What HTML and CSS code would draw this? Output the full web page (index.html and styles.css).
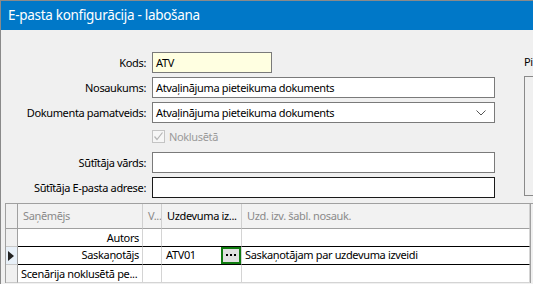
FILE: index.html
```html
<!DOCTYPE html>
<html>
<head>
<meta charset="utf-8">
<link rel="stylesheet" href="styles.css">
</head>
<body>
<div class="window">
  <div class="titlebar">E-pasta konfigurācija - labošana</div>
  <div class="content">
    <div class="top">
      <div class="fields">
        <label class="lbl">Kods:</label>
        <div class="inp short yellow">ATV</div>
        <label class="lbl">Nosaukums:</label>
        <div class="inp">Atvaļinājuma pieteikuma dokuments</div>
        <label class="lbl">Dokumenta pamatveids:</label>
        <div class="inp combo">Atvaļinājuma pieteikuma dokuments
          <svg class="chev" width="10" height="6" viewBox="0 0 10 6"><path d="M0.5 0.5 L5 5 L9.5 0.5" fill="none" stroke="#555" stroke-width="1"/></svg>
        </div>
        <span></span>
        <div class="check">
          <span class="box"><svg width="11" height="11" viewBox="0 0 11 11"><path d="M1.5 5.5 L4 8.5 L9.5 1.5" fill="none" stroke="#b5b5b5" stroke-width="1.2"/></svg></span>
          <span class="check-text">Noklusētā</span>
        </div>
        <label class="lbl">Sūtītāja vārds:</label>
        <div class="inp"></div>
        <label class="lbl">Sūtītāja E-pasta adrese:</label>
        <div class="inp focus"></div>
      </div>
      <div class="side">
        <div class="side-lbl">Pi</div>
        <div class="side-box"></div>
      </div>
    </div>
    <div class="grid">
      <div class="c ind hd"></div>
      <div class="c hd gray">Saņēmējs</div>
      <div class="c hd gray">V...</div>
      <div class="c hd">Uzdevuma iz...</div>
      <div class="c hd gray">Uzd. izv. šabl. nosauk.</div>
      <div class="c hd end"></div>

      <div class="c ind"></div>
      <div class="c right">Autors</div>
      <div class="c"></div>
      <div class="c"></div>
      <div class="c"></div>
      <div class="c end"></div>

      <div class="c ind sel-ind"><span class="tri"></span></div>
      <div class="c right sel">Saskaņotājs</div>
      <div class="c sel"></div>
      <div class="c sel edit">ATV01<span class="dots"><svg width="12" height="3" viewBox="0 0 12 3"><rect x="1" y="0" width="2" height="2" fill="#000"/><rect x="5" y="0" width="2" height="2" fill="#000"/><rect x="9" y="0" width="2" height="2" fill="#000"/></svg></span></div>
      <div class="c sel">Saskaņotājam par uzdevuma izveidi</div>
      <div class="c end"></div>

      <div class="c ind"></div>
      <div class="c">Scenārija noklusētā pe...</div>
      <div class="c"></div>
      <div class="c"></div>
      <div class="c"></div>
      <div class="c end"></div>
    </div>
  </div>
</div>
</body>
</html>
```

FILE: styles.css
```css
* { box-sizing: border-box; }
html, body { margin: 0; padding: 0; }
body {
  width: 533px;
  height: 284px;
  overflow: hidden;
  background: #f0f0f0;
  font-family: "Noto Sans", "Open Sans", sans-serif;
  font-size: 11px;
  letter-spacing: -0.35px;
  color: #000;
}
.window {
  width: 533px;
  height: 284px;
  border-top: 1px solid #8a8a8a;
  border-left: 1px solid #8a8a8a;
  background: #f0f0f0;
  overflow: hidden;
}
.titlebar {
  height: 29px;
  background: #0078c8;
  color: #fff;
  font-size: 13.5px;
  letter-spacing: -0.3px;
  line-height: 28px;
  padding-left: 7px;
}
.content {
  padding-top: 22px;
}
.top {
  display: flex;
  height: 151px;
}
.fields {
  flex: none;
  display: grid;
  grid-template-columns: 145px 343px;
  grid-auto-rows: 21px;
  row-gap: 4px;
  column-gap: 6px;
  width: 523px;
  align-items: center;
}
.lbl {
  text-align: right;
  line-height: 21px;
  white-space: nowrap;
}
.inp {
  height: 21px;
  border: 1px solid #7a7a7a;
  background: #fff;
  line-height: 19px;
  padding-left: 3px;
  white-space: nowrap;
  position: relative;
}
.inp.short { width: 120px; }
.inp.yellow { background: #ffffe1; }
.inp.focus { border-color: #1a1a1a; }
.combo .chev {
  position: absolute;
  right: 8px;
  top: 7px;
}
.check {
  display: flex;
  align-items: center;
  gap: 4px;
  height: 21px;
  margin-top: -2px;
}
.box {
  width: 13px;
  height: 13px;
  border: 1px solid #c4c4c4;
  background: #f6f6f6;
  display: flex;
  align-items: center;
  justify-content: center;
}
.check-text { color: #9a9a9a; }
.side {
  display: flex;
  flex-direction: column;
  width: 12px;
  flex: none;
  overflow: hidden;
}
.side-lbl {
  white-space: nowrap;
  line-height: 14px;
  margin-top: 3px;
}
.side-box {
  margin-top: 7px;
  height: 120px;
  border: 1px solid #8a8a8a;
  border-right: none;
  background: #f0f0f0;
  width: 12px;
}
.grid {
  margin-left: 4px;
  display: grid;
  grid-template-columns: 12px 125px 19px 80px 288px 20px;
  grid-template-rows: 25px 18px 18px 18px;
  border-top: 1px solid #a0a0a0;
  border-left: 1px solid #a0a0a0;
  background: #fff;
}
.c {
  border-right: 1px solid #d4d4d4;
  border-bottom: 1px solid #d4d4d4;
  padding: 0 3px;
  white-space: nowrap;
  overflow: hidden;
  line-height: 17px;
  position: relative;
}
.c.hd {
  background: #f2f2f2;
  border-right: 1px solid #d0d0d0;
  border-bottom: 1px solid #a0a0a0;
  line-height: 24px;
  padding-left: 5px;
}
.c.gray { color: #8a8a8a; }
.c.end {
  background: #f0f0f0;
  border-right: none;
  border-bottom: none;
  border-left: 1px solid #a0a0a0;
}
.c.hd.end { background: #f0f0f0; border-bottom: none; }
.c.ind {
  background: #f0f0f0;
  border-right: 1px solid #a0a0a0;
  border-bottom: 1px solid #c8c8c8;
  padding: 0;
}
.c.ind.hd { background: #f0f0f0; border-bottom: 1px solid #a0a0a0; }
.sel-ind { background: #e8f0f8 !important; }
.c.right { text-align: right; }
.c.sel {
  border-top: 1px solid #000;
  border-bottom: 1px solid #000;
  margin-top: -1px;
  line-height: 16px;
}
.tri {
  position: absolute;
  left: 2px;
  top: 4px;
  width: 0;
  height: 0;
  border-top: 5px solid transparent;
  border-bottom: 5px solid transparent;
  border-left: 6px solid #222;
}
.edit { padding-left: 4px; }
.dots {
  position: absolute;
  right: 0;
  top: 0;
  width: 20px;
  height: 17px;
  border: 2px solid #107c10;
  background: #e1e1e1;
  display: flex;
  align-items: center;
  justify-content: center;
}
```
